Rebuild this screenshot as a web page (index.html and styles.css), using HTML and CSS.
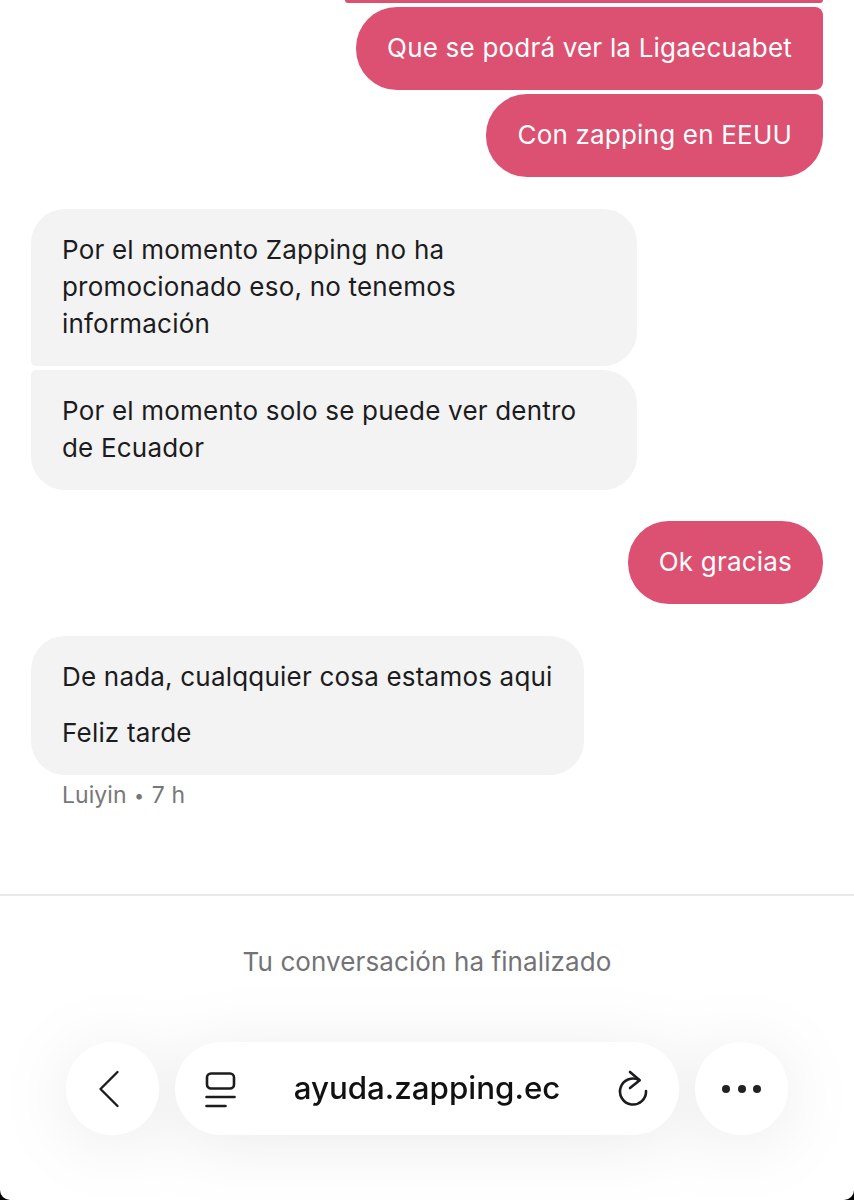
FILE: index.html
```html
<!DOCTYPE html>
<html lang="es">
<head>
  <meta charset="UTF-8" />
  <title>Ayuda | Zapping</title>
  <link rel="stylesheet" href="styles.css">
</head>
<body>

  <!-- Conversation -->
  <main class="chat">
    <div class="bubble out tail-top cut"></div>
    <div class="bubble out tail-top">Que se podrá ver la Ligaecuabet</div>
    <div class="bubble out tail-top last">Con zapping en EEUU</div>

    <div class="bubble in first">Por el momento Zapping no ha promocionado eso, no tenemos información</div>
    <div class="bubble in second">Por el momento solo se puede ver dentro de Ecuador</div>

    <div class="bubble out single">Ok gracias</div>

    <div class="bubble in single-in">
      <p>De nada, cualqquier cosa estamos aqui</p>
      <p>Feliz tarde</p>
    </div>
    <div class="meta">Luiyin <span class="dot">•</span> 7 h</div>
  </main>

  <!-- Closed conversation notice -->
  <div class="ended">Tu conversación ha finalizado</div>

  <!-- Browser toolbar -->
  <div class="toolbar">
    <div class="round">
      <svg class="back" width="22" height="38" viewBox="0 0 22 38" fill="none" stroke="#1c1c1e" stroke-width="2.4" stroke-linecap="round" stroke-linejoin="round"><path d="M19.500 2 2.500 19l17 17"/></svg>
    </div>
    <div class="address">
      <svg class="reader" width="31" height="38" viewBox="0 0 31 38" fill="none" stroke="#1c1c1e" stroke-width="2.6" stroke-linecap="round"><rect x="2" y="3.500" width="27" height="15" rx="4"/><path d="M1.500 27h28M1.500 36h19"/></svg>
      <span class="url">ayuda.zapping.ec</span>
      <svg class="reload" width="31" height="38" viewBox="0 0 31 38" fill="none" stroke="#1c1c1e" stroke-width="2.6" stroke-linecap="round" stroke-linejoin="round"><path d="M21 10A13 13 0 1 0 28 21"/><path d="m12 2 9.700 8.300L12 18"/></svg>
    </div>
    <div class="round">
      <div class="dots"><i></i><i></i><i></i></div>
    </div>
  </div>

</body>
</html>
```

FILE: styles.css
```css
* {
  box-sizing: border-box;
}

body {
  margin: 0;
  width: 854px;
  height: 1200px;
  overflow: hidden;
  position: relative;
  background: #fff;
  font-family: Inter, "Liberation Sans", sans-serif;
  font-size: 26px;
  letter-spacing: 0.2px;
  line-height: 37px;
  color: #1c1c1e;
}

/* rounded corners of the phone display */
body::after {
  content: "";
  position: absolute;
  inset: 0;
  border-radius: 0 0 10px 10px;
  box-shadow: 0 0 0 12px #000;
  pointer-events: none;
}

/* Chat */
.chat {
  height: 896px;
  padding: 0 31px;
  display: flex;
  flex-direction: column;
  border-bottom: 2px solid #e9e9e9;
}

.bubble {
  padding: 22px 31px 24px;
}

.bubble p {
  margin: 0;
}

.bubble p + p {
  margin-top: 19px;
}

.out {
  align-self: flex-end;
  background: #dc5171;
  color: #fff;
  border-radius: 41px;
}

.tail-top {
  border-top-right-radius: 8px;
  border-bottom-right-radius: 8px;
  margin-bottom: 4px;
}

.cut {
  width: 478px;
  height: 3px;
  padding: 0;
  border-radius: 0 0 8px 8px;
}

.last {
  border-bottom-right-radius: 41px;
  margin-bottom: 32px;
}

.in {
  align-self: flex-start;
  background: #f3f3f3;
  border-radius: 34px;
}

.first {
  width: 606px;
  border-bottom-left-radius: 5px;
  margin-bottom: 4px;
}

.second {
  width: 606px;
  border-top-left-radius: 5px;
  margin-bottom: 31px;
}

.single {
  margin-bottom: 32px;
}

.single-in {
  width: 553px;
}

.meta {
  margin: 5px 0 0 31px;
  font-size: 23px;
  line-height: 30px;
  letter-spacing: 0.05px;
  color: #77777a;
}

.dot {
  font-size: 18px;
  margin: 0 1px;
  vertical-align: 1px;
}

.ended {
  margin-top: 47px;
  text-align: center;
  line-height: 38px;
  letter-spacing: 0.1px;
  color: #737377;
}

/* Browser toolbar */
.toolbar {
  position: absolute;
  left: 66px;
  right: 66px;
  top: 1042px;
  display: flex;
  gap: 16px;
  filter: drop-shadow(0 8px 34px rgba(0, 0, 0, 0.08));
}

.round {
  width: 93px;
  height: 93px;
  border-radius: 50%;
  background: #fff;
  flex: none;
  display: flex;
  align-items: center;
  justify-content: center;
}

.back {
  margin-right: 7px;
}

.address {
  flex: 1;
  height: 93px;
  border-radius: 47px;
  background: #fff;
  display: flex;
  align-items: center;
  padding: 0 30px;
  justify-content: space-between;
}

.url {
  font-size: 31.3px;
  font-weight: 500;
  letter-spacing: 0;
  color: #111;
}

.dots {
  display: flex;
  gap: 7.5px;
}

.dots i {
  width: 8px;
  height: 8px;
  border-radius: 50%;
  background: #222;
}
```
